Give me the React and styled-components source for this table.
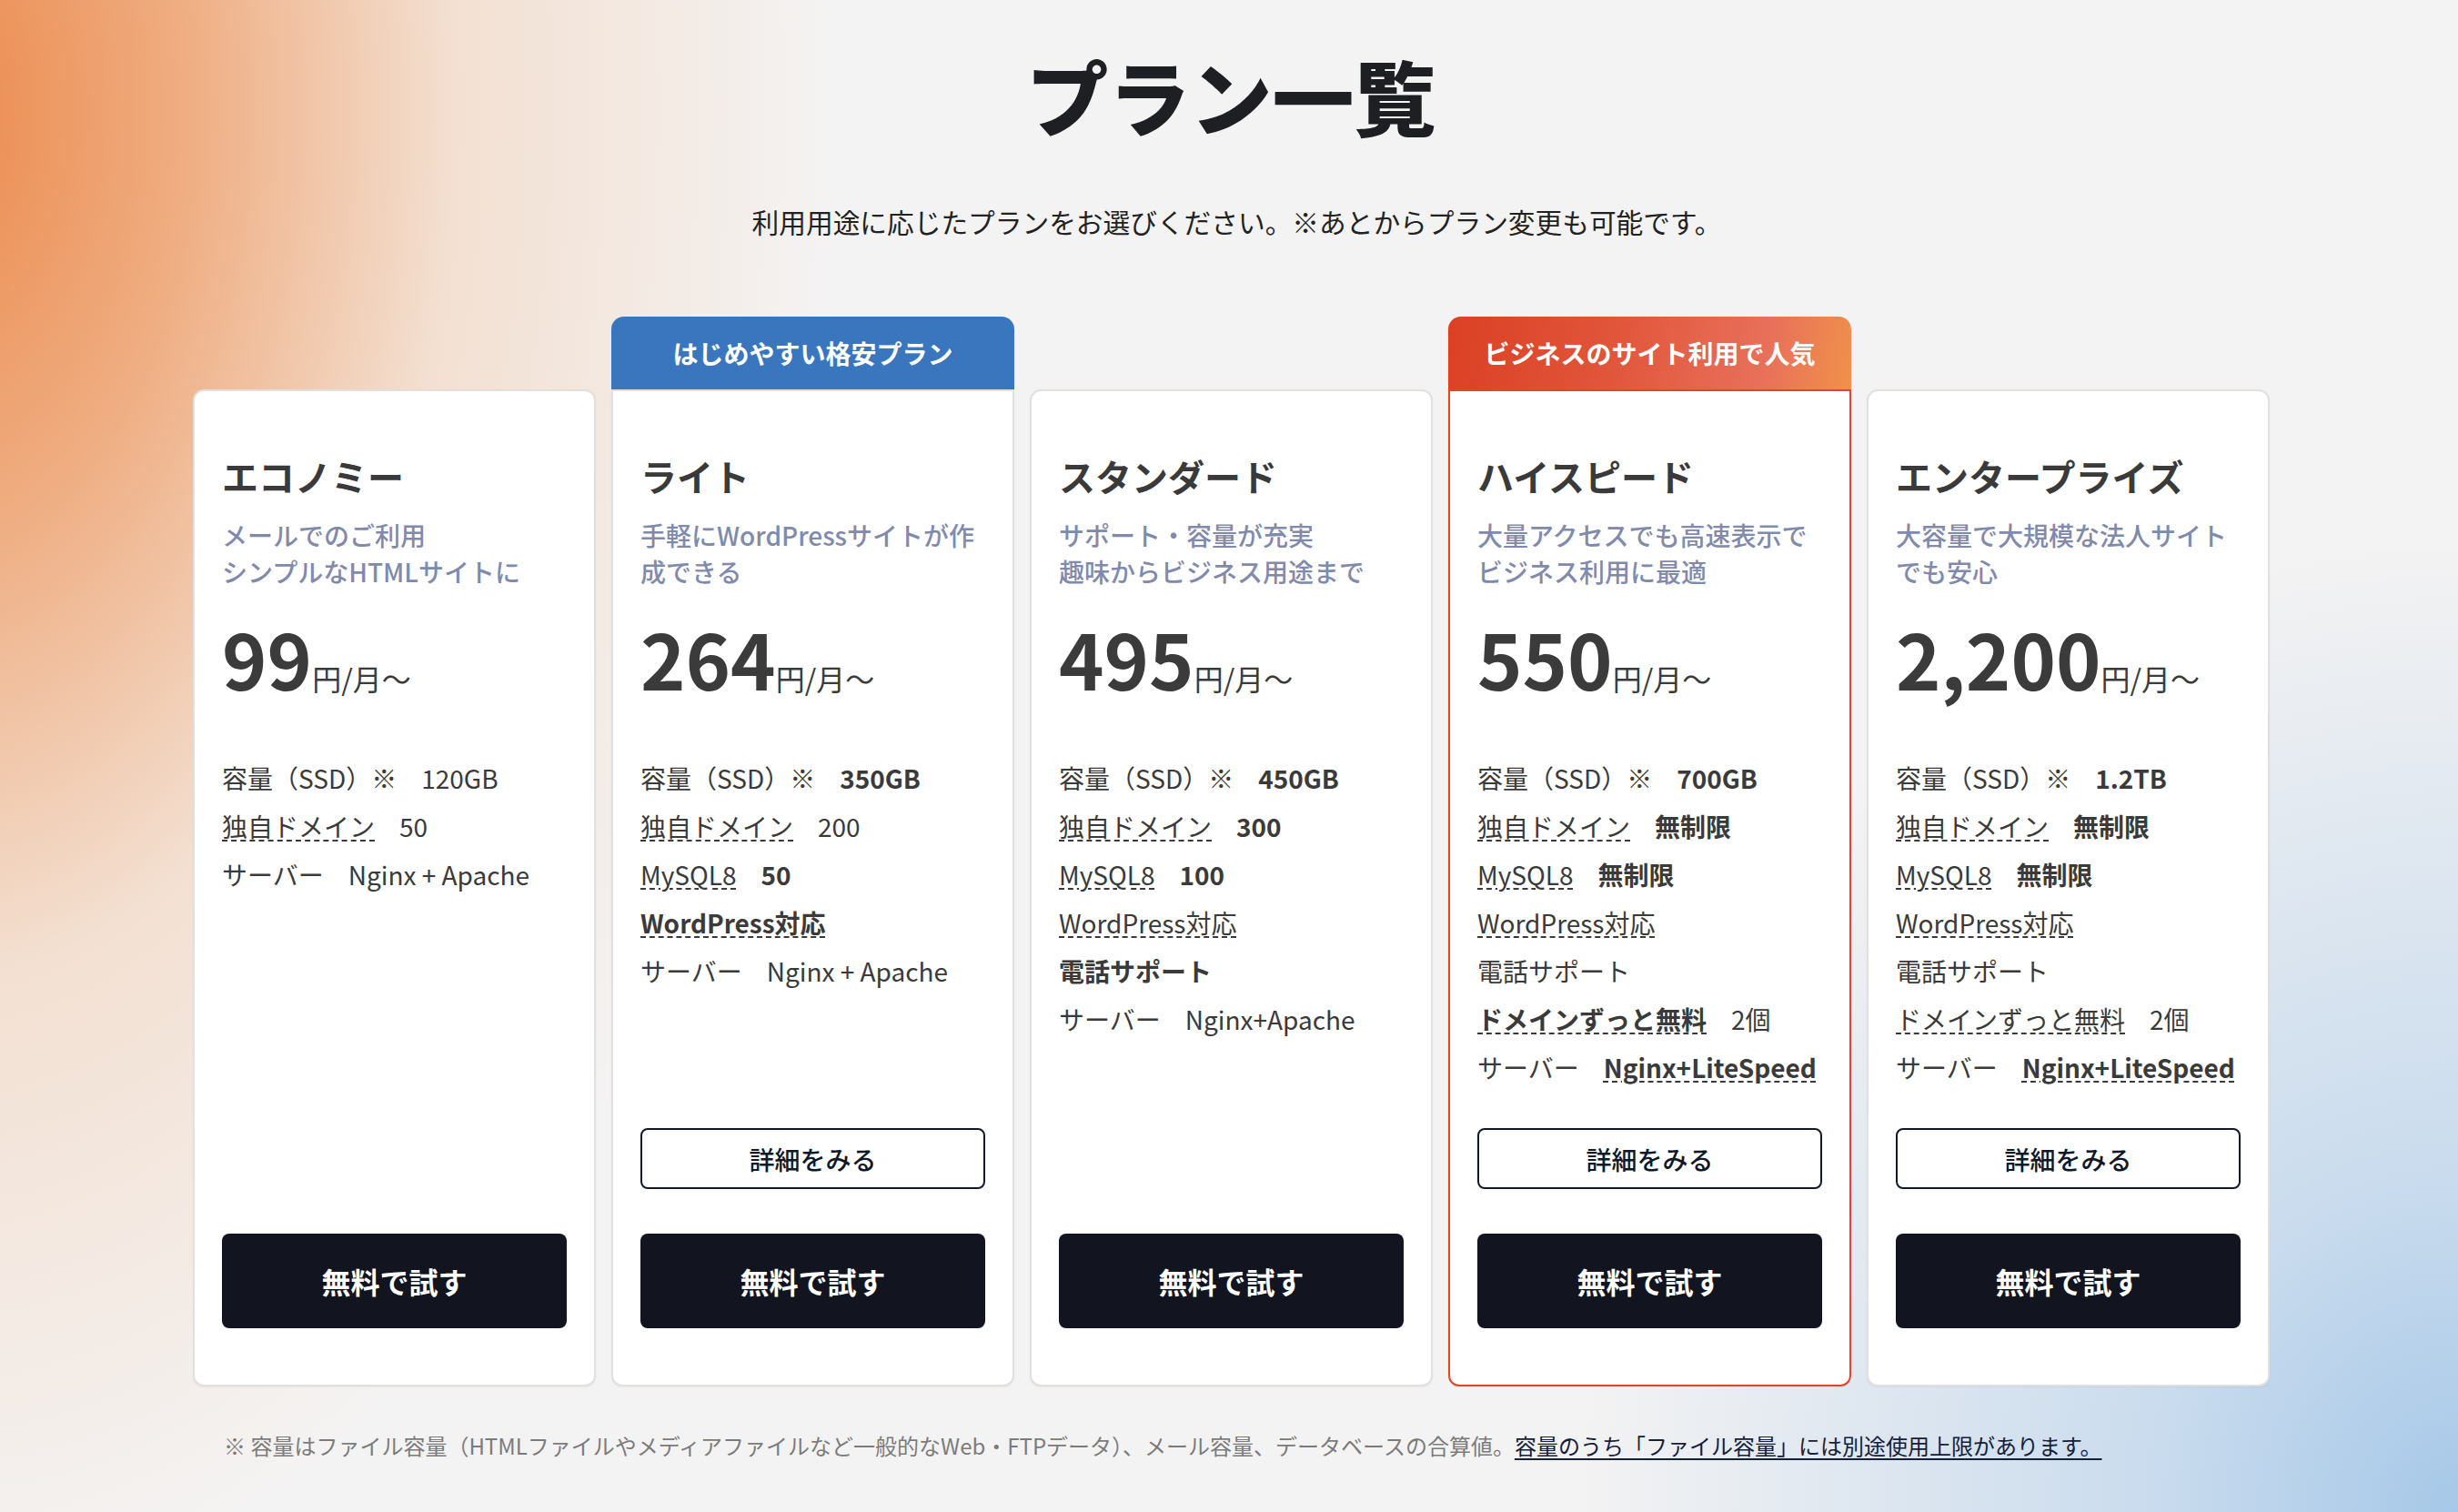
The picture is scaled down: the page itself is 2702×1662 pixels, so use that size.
import React from 'react';
import styled, { createGlobalStyle } from 'styled-components';

const GlobalStyle = createGlobalStyle`
    *, *::before, *::after {
        box-sizing: border-box;
    }

    html, body {
        margin: 0;
        padding: 0;
    }

    body {
        font-family: "Noto Sans CJK JP", "Noto Sans", sans-serif;
        color: #3a3a3a;
    }
`;

const Page = styled.div`
    min-height: 100vh;
    padding: 50px 0 50px 5px;
    background:
        radial-gradient(ellipse 1000px 1650px at -80px 120px,
            rgba(236, 136, 74, 1) 0%,
            rgba(238, 160, 108, 0.85) 28%,
            rgba(242, 208, 182, 0.55) 58%,
            rgba(244, 243, 243, 0) 100%),
        radial-gradient(ellipse 980px 1080px at 100% 100%,
            rgba(166, 200, 232, 1) 0%,
            rgba(188, 212, 236, 0.75) 35%,
            rgba(244, 243, 243, 0) 100%),
        #f4f3f3;
`;

const Title = styled.h1`
    margin: 0;
    text-align: center;
    font-size: 90px;
    line-height: 108px;
    font-weight: 900;
    color: #1e1f22;
`;

const Lead = styled.p`
    margin: 63px 0 0;
    padding-left: 12px;
    text-align: center;
    font-size: 29.7px;
    line-height: 45px;
    color: #222;
`;

const Plans = styled.div`
    width: 2283px;
    margin: 82px auto 0;
    display: grid;
    grid-template-columns: repeat(5, 1fr);
    column-gap: 17px;
`;

const Column = styled.div`
    display: flex;
    flex-direction: column;
`;

const Badge = styled.div`
    height: 80px;
    border-radius: 14px 14px 0 0;
    display: flex;
    align-items: center;
    justify-content: center;
    font-size: 28px;
    font-weight: 700;
    color: #fff;
    background: ${props => props.$tone === 'red'
        ? 'linear-gradient(100deg, #db4024 0%, #e1553a 40%, #e8705a 78%, #f0914a 100%)'
        : '#3a76be'};
`;

const BadgeSpace = styled.div`
    height: 80px;
`;

const Card = styled.div`
    flex: 1;
    display: flex;
    flex-direction: column;
    background: #fff;
    border: 2px solid ${props => props.$accent ? '#e0462a' : '#e2dfdd'};
    border-radius: ${props => props.$badged ? '0 0 12px 12px' : '12px'};
    padding: 65px 30px 62px;
    box-shadow: 0 1px 2px rgba(0, 0, 0, 0.05);
`;

const PlanName = styled.h2`
    margin: 0;
    font-size: 40px;
    line-height: 56px;
    font-weight: 700;
    color: #3a3a3a;
`;

const Desc = styled.p`
    margin: 17px 0 0;
    min-height: 80px;
    font-size: 28px;
    line-height: 40px;
    font-weight: 500;
    color: #7f8aad;
`;

const Price = styled.div`
    margin-top: 33px;
    font-size: 84px;
    line-height: 84px;
    font-weight: 700;
    color: #3b3b3b;

    small {
        font-size: 32px;
        font-weight: 400;
    }
`;

const Features = styled.ul`
    flex: 1;
    list-style: none;
    margin: 42px 0 40px;
    padding: 0;
`;

const Feature = styled.li`
    display: flex;
    align-items: baseline;
    gap: 27px;
    font-size: 28px;
    line-height: 53px;
    color: #3a3a3a;
`;

const Term = styled.span`
    font-weight: ${props => props.$bold ? 700 : 400};
    text-decoration: ${props => props.$dashed ? 'underline dashed' : 'none'};
    text-decoration-thickness: 2px;
    text-underline-offset: 3px;
`;

const DetailButton = styled.button`
    width: 100%;
    height: 67px;
    margin-bottom: 49px;
    border: 2px solid #111827;
    border-radius: 8px;
    background: #fff;
    font-family: inherit;
    font-size: 28px;
    font-weight: 500;
    color: #111827;
    cursor: pointer;
`;

const TryButton = styled.button`
    width: 100%;
    height: 104px;
    border: 0;
    border-radius: 8px;
    background: #12151f;
    font-family: inherit;
    font-size: 32px;
    font-weight: 700;
    color: #fff;
    cursor: pointer;
`;

const Note = styled.p`
    width: 2283px;
    margin: 47px auto 0;
    padding: 0 34px;
    font-size: 24px;
    line-height: 36px;
    color: #7b7b7b;

    a {
        color: #15203a;
        text-decoration: underline;
        text-decoration-thickness: 2px;
        text-underline-offset: 4px;
    }
`;

const PLANS = [
    {
        name: 'エコノミー',
        desc: ['メールでのご利用', 'シンプルなHTMLサイトに'],
        price: '99',
        details: false,
        features: [
            { label: '容量（SSD）※', value: '120GB' },
            { label: '独自ドメイン', dashed: true, value: '50' },
            { label: 'サーバー', value: 'Nginx + Apache' },
        ],
    },
    {
        name: 'ライト',
        badge: { text: 'はじめやすい格安プラン', tone: 'blue' },
        desc: ['手軽にWordPressサイトが作成できる'],
        price: '264',
        details: true,
        features: [
            { label: '容量（SSD）※', value: '350GB', valueBold: true },
            { label: '独自ドメイン', dashed: true, value: '200' },
            { label: 'MySQL8', dashed: true, value: '50', valueBold: true },
            { label: 'WordPress対応', dashed: true, bold: true },
            { label: 'サーバー', value: 'Nginx + Apache' },
        ],
    },
    {
        name: 'スタンダード',
        desc: ['サポート・容量が充実', '趣味からビジネス用途まで'],
        price: '495',
        details: false,
        features: [
            { label: '容量（SSD）※', value: '450GB', valueBold: true },
            { label: '独自ドメイン', dashed: true, value: '300', valueBold: true },
            { label: 'MySQL8', dashed: true, value: '100', valueBold: true },
            { label: 'WordPress対応', dashed: true },
            { label: '電話サポート', bold: true },
            { label: 'サーバー', value: 'Nginx+Apache' },
        ],
    },
    {
        name: 'ハイスピード',
        badge: { text: 'ビジネスのサイト利用で人気', tone: 'red' },
        accent: true,
        desc: ['大量アクセスでも高速表示で', 'ビジネス利用に最適'],
        price: '550',
        details: true,
        features: [
            { label: '容量（SSD）※', value: '700GB', valueBold: true },
            { label: '独自ドメイン', dashed: true, value: '無制限', valueBold: true },
            { label: 'MySQL8', dashed: true, value: '無制限', valueBold: true },
            { label: 'WordPress対応', dashed: true },
            { label: '電話サポート' },
            { label: 'ドメインずっと無料', dashed: true, bold: true, value: '2個' },
            { label: 'サーバー', value: 'Nginx+LiteSpeed', valueBold: true, valueDashed: true },
        ],
    },
    {
        name: 'エンタープライズ',
        desc: ['大容量で大規模な法人サイト', 'でも安心'],
        price: '2,200',
        details: true,
        features: [
            { label: '容量（SSD）※', value: '1.2TB', valueBold: true },
            { label: '独自ドメイン', dashed: true, value: '無制限', valueBold: true },
            { label: 'MySQL8', dashed: true, value: '無制限', valueBold: true },
            { label: 'WordPress対応', dashed: true },
            { label: '電話サポート' },
            { label: 'ドメインずっと無料', dashed: true, value: '2個' },
            { label: 'サーバー', value: 'Nginx+LiteSpeed', valueBold: true, valueDashed: true },
        ],
    },
];

const PlanColumn = ({ plan }) => (
    <Column>
        {plan.badge
            ? <Badge $tone={plan.badge.tone}>{plan.badge.text}</Badge>
            : <BadgeSpace />}
        <Card $accent={plan.accent} $badged={!!plan.badge}>
            <PlanName>{plan.name}</PlanName>
            <Desc>
                {plan.desc.map((line, i) => (
                    <React.Fragment key={i}>
                        {i > 0 && <br />}
                        {line}
                    </React.Fragment>
                ))}
            </Desc>
            <Price>
                {plan.price}
                <small>円/月〜</small>
            </Price>
            <Features>
                {plan.features.map((f, i) => (
                    <Feature key={i}>
                        <Term $bold={f.bold} $dashed={f.dashed}>{f.label}</Term>
                        {f.value && (
                            <Term $bold={f.valueBold} $dashed={f.valueDashed}>{f.value}</Term>
                        )}
                    </Feature>
                ))}
            </Features>
            {plan.details && <DetailButton>詳細をみる</DetailButton>}
            <TryButton>無料で試す</TryButton>
        </Card>
    </Column>
);

const App = () => (
    <>
        <GlobalStyle />
        <Page>
            <Title>プラン一覧</Title>
            <Lead>利用用途に応じたプランをお選びください。※あとからプラン変更も可能です。</Lead>
            <Plans>
                {PLANS.map(plan => (
                    <PlanColumn key={plan.name} plan={plan} />
                ))}
            </Plans>
            <Note>
                ※ 容量はファイル容量（HTMLファイルやメディアファイルなど一般的なWeb・FTPデータ）、メール容量、データベースの合算値。
                <a href="#">容量のうち「ファイル容量」には別途使用上限があります。</a>
            </Note>
        </Page>
    </>
);

export default App;
